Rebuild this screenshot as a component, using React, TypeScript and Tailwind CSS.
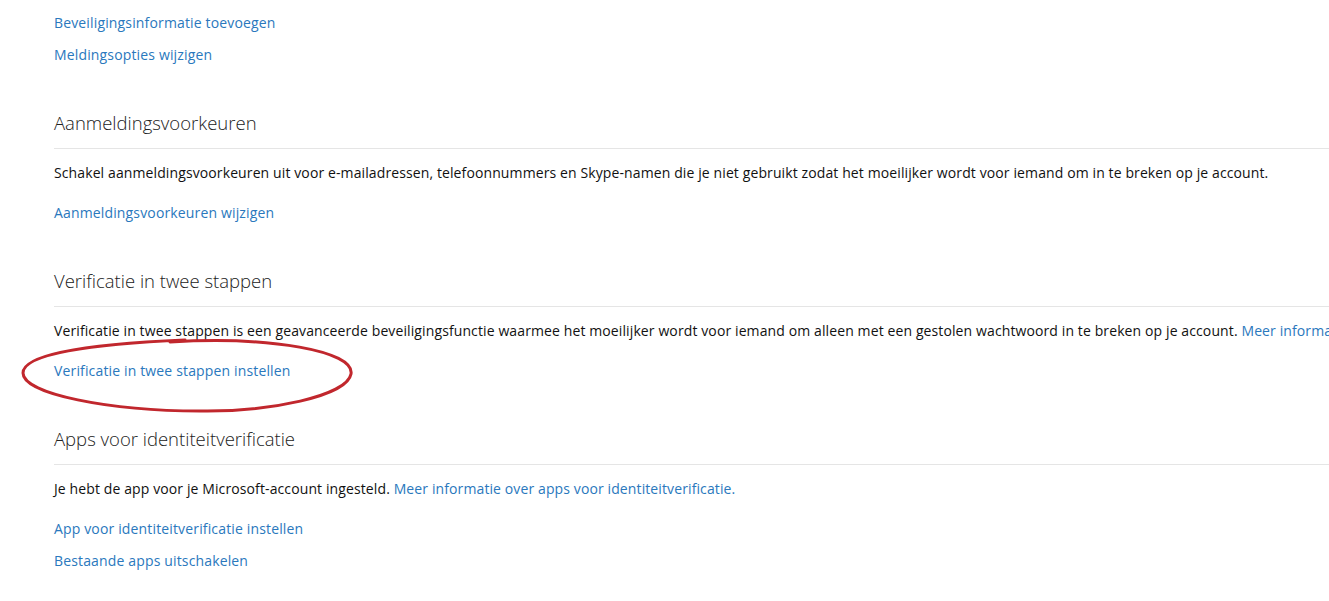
import React from 'react';

const font = { fontFamily: '"Open Sans", "Noto Sans", sans-serif' };

function Link({ children }: { children: React.ReactNode }) {
  return <a className="block text-[14px] leading-5 tracking-[0.15px] text-[#2a78bd]">{children}</a>;
}

function Section({ title, text, links }: { title: string; text: React.ReactNode; links: string[] }) {
  return (
    <section className="mt-[44px]">
      <h2 className="text-[18.5px] font-light leading-7 text-[#222]">{title}</h2>
      <div className="mt-[11px] h-px bg-[#e5e5e5]" />
      <p className="mt-[14px] whitespace-nowrap text-[14px] leading-5 tracking-[0.11px] text-[#111]">{text}</p>
      <div className="mt-[20px] flex flex-col gap-3">
        {links.map((l) => (
          <Link key={l}>{l}</Link>
        ))}
      </div>
    </section>
  );
}

export default function App() {
  return (
    <div className="relative h-[601px] w-full overflow-hidden bg-white pl-[54px] pt-[13px]" style={font}>
      <div className="flex flex-col gap-3">
        <Link>Beveiligingsinformatie toevoegen</Link>
        <Link>Meldingsopties wijzigen</Link>
      </div>

      <Section
        title="Aanmeldingsvoorkeuren"
        text="Schakel aanmeldingsvoorkeuren uit voor e-mailadressen, telefoonnummers en Skype-namen die je niet gebruikt zodat het moeilijker wordt voor iemand om in te breken op je account."
        links={['Aanmeldingsvoorkeuren wijzigen']}
      />

      <Section
        title="Verificatie in twee stappen"
        text={
          <>
            Verificatie in twee stappen is een geavanceerde beveiligingsfunctie waarmee het moeilijker wordt voor iemand om alleen met een gestolen wachtwoord in te breken op je account.{' '}
            <span className="text-[#2a78bd]">Meer informatie</span>
          </>
        }
        links={['Verificatie in twee stappen instellen']}
      />

      <Section
        title="Apps voor identiteitverificatie"
        text={
          <>
            Je hebt de app voor je Microsoft-account ingesteld.{' '}
            <span className="text-[#2a78bd]">Meer informatie over apps voor identiteitverificatie.</span>
          </>
        }
        links={['App voor identiteitverificatie instellen', 'Bestaande apps uitschakelen']}
      />

      {/* rode markering rond de link */}
      <svg className="pointer-events-none absolute left-[20px] top-[336px]" width="336" height="80" viewBox="0 0 336 80" fill="none">
        <path
          d="M150 6 C250 0 335 15 331 38 C327 60 250 76 180 75 C90 75 3 58 3 37 C3 18 70 8 165 4"
          stroke="#c1272d"
          strokeWidth="3"
          strokeLinecap="round"
        />
      </svg>
    </div>
  );
}
